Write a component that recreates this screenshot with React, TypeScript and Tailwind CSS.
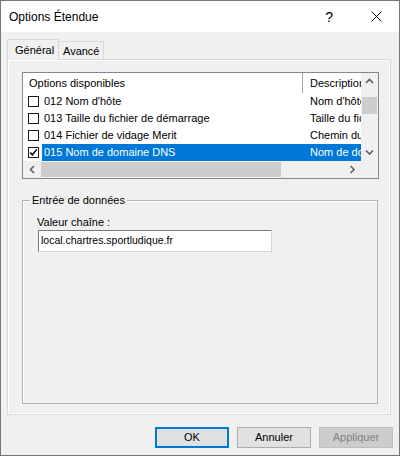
import React from 'react';

const FONT = { fontFamily: '"Liberation Sans", Arial, sans-serif' };

const ROWS = [
  { code: "012 Nom d'hôte", desc: "Nom d'hôte du client", checked: false, selected: false },
  { code: '013 Taille du fichier de démarrage', desc: 'Taille du fichier de démarrage', checked: false, selected: false },
  { code: '014 Fichier de vidage Merit', desc: 'Chemin du fichier de vidage', checked: false, selected: false },
  { code: '015 Nom de domaine DNS', desc: 'Nom de domaine DNS', checked: true, selected: true },
];

function Chevron({ dir }: { dir: 'up' | 'down' | 'left' | 'right' }) {
  const d = {
    up: 'M1 5 L4.5 1.5 L8 5',
    down: 'M1 1.5 L4.5 5 L8 1.5',
    left: 'M5 1 L1.5 4.5 L5 8',
    right: 'M1.5 1 L5 4.5 L1.5 8',
  }[dir];
  const vertical = dir === 'up' || dir === 'down';
  return (
    <svg width={vertical ? 9 : 7} height={vertical ? 7 : 9} viewBox={vertical ? '0 0 9 7' : '0 0 7 9'}>
      <path d={d} fill="none" stroke="#606060" strokeWidth="1.6" />
    </svg>
  );
}

function CheckBox({ checked }: { checked: boolean }) {
  return (
    <div className="w-[11px] h-[11px] border border-[#1a1a1a] bg-white flex items-center justify-center">
      {checked && (
        <svg width="9" height="9" viewBox="0 0 9 9">
          <path d="M1.2 4.4 L3.4 6.8 L7.8 1.4" fill="none" stroke="#000" strokeWidth="1.5" />
        </svg>
      )}
    </div>
  );
}

export default function App() {
  return (
    <div style={FONT} className="w-[400px] h-[456px] border border-[#777777] bg-[#f0f0f0] flex flex-col text-black">
      {/* Title bar */}
      <div className="h-[31px] bg-white flex items-center shrink-0">
        <span className="pl-[8px] text-[12px]">Options Étendue</span>
        <span className="ml-auto mr-[38px] text-[14px] leading-none">?</span>
        <svg width="11" height="11" viewBox="0 0 11 11" className="mr-[17px]">
          <path d="M0.5 0.5 L10.5 10.5 M10.5 0.5 L0.5 10.5" stroke="#000" strokeWidth="1" />
        </svg>
      </div>

      {/* Tabs */}
      <div className="flex items-end pl-[6px] pt-[7px] text-[11px]">
        <div className="relative z-10 -mb-px h-[21px] w-[52px] border border-b-0 border-[#d9d9d9] bg-[#f0f0f0] flex items-center pl-[7px]">
          Général
        </div>
        <div className="h-[18px] w-[45px] border border-l-0 border-b-0 border-[#d9d9d9] bg-[#f0f0f0] flex items-center pl-[4px] pt-[1px]">
          Avancé
        </div>
      </div>

      {/* Tab page */}
      <div className="ml-[6px] w-[384px] h-[356px] border border-[#d9d9d9] shadow-[inset_0_0_0_1px_#ffffff] flex flex-col text-[11px]">
        {/* List view */}
        <div className="ml-[14px] mt-[12px] w-[357px] h-[107px] border border-[#828790] bg-white flex flex-col">
          <div className="flex h-[88px]">
            <div className="w-[338px] overflow-hidden flex flex-col">
              <div className="h-[20px] flex items-stretch shrink-0">
                <div className="w-[279px] pl-[6px] flex items-center shrink-0">Options disponibles</div>
                <div className="w-px bg-[#a5a5a5] shrink-0" />
                <div className="pl-[7px] flex items-center whitespace-nowrap">Description</div>
              </div>
              {ROWS.map((r) => (
                <div key={r.code} className="h-[17px] flex items-stretch shrink-0">
                  <div className="w-[19px] pl-[5px] flex items-center shrink-0">
                    <CheckBox checked={r.checked} />
                  </div>
                  <div className={`flex flex-1 items-center whitespace-nowrap overflow-hidden ${r.selected ? 'bg-[#0078d7] text-white' : ''}`}>
                    <div className="w-[260px] pl-[2px] shrink-0">{r.code}</div>
                    <div className="pl-[8px]">{r.desc}</div>
                  </div>
                </div>
              ))}
            </div>
            {/* Vertical scrollbar */}
            <div className="w-[17px] bg-[#f0f0f0] flex flex-col items-center">
              <div className="h-[17px] flex items-center justify-center"><Chevron dir="up" /></div>
              <div className="mt-[7px] w-[15px] h-[17px] bg-[#cdcdcd]" />
              <div className="flex-1" />
              <div className="h-[17px] flex items-center justify-center"><Chevron dir="down" /></div>
            </div>
          </div>
          {/* Horizontal scrollbar */}
          <div className="h-[17px] flex bg-[#f0f0f0]">
            <div className="w-[338px] flex items-center">
              <div className="w-[18px] h-full flex items-center justify-center"><Chevron dir="left" /></div>
              <div className="w-[240px] h-[15px] bg-[#cdcdcd]" />
              <div className="flex-1" />
              <div className="w-[17px] h-full flex items-center justify-center"><Chevron dir="right" /></div>
            </div>
            <div className="w-[17px] bg-[#f0f0f0]" />
          </div>
        </div>

        {/* Group box */}
        <div className="relative ml-[14px] mt-[21px] w-[356px] h-[204px] border border-[#b4b4b4] shadow-[inset_1px_1px_0_#ffffff] pl-[14px] pt-[14px]">
          <span className="absolute -top-[8px] left-[7px] px-[2px] bg-[#f0f0f0] leading-[14px]">Entrée de données</span>
          <div className="leading-[14px]">Valeur chaîne :</div>
          <div className="mt-[1px] ml-[1px] w-[234px] h-[22px] bg-white border border-t-[#7a7a7a] border-l-[#7a7a7a] border-r-[#d6d6d6] border-b-[#d6d6d6] flex items-center pl-[2px] text-[10.5px]">
            local.chartres.sportludique.fr
          </div>
        </div>
      </div>

      {/* Buttons */}
      <div className="flex justify-end gap-[8px] pr-[6px] mt-[12px] text-[11px]">
        <div className="w-[74px] h-[21px] border-2 border-[#0078d7] bg-[#e1e1e1] flex items-center justify-center">OK</div>
        <div className="w-[74px] h-[21px] border border-[#adadad] bg-[#e1e1e1] flex items-center justify-center">Annuler</div>
        <div className="w-[74px] h-[21px] border border-[#bfbfbf] bg-[#cccccc] text-[#838383] flex items-center justify-center">Appliquer</div>
      </div>
    </div>
  );
}
